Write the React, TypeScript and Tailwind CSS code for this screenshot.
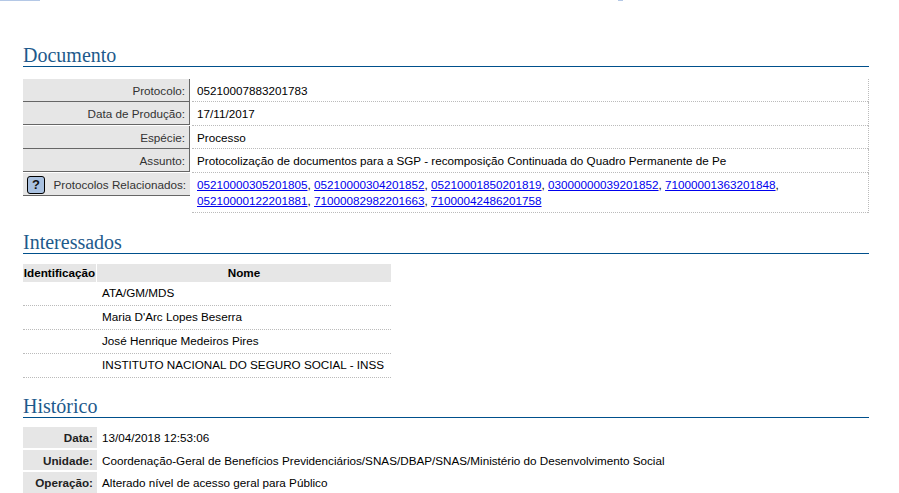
const Heading = ({ title }: { title: string }) => (
    <h2 className="h-[24px] border-b border-[#00508c] font-['Liberation_Serif',serif] text-[20px] leading-[24px] text-[#1d5a8c]">
        {title}
    </h2>
)

const DocRow = ({ label, h, children, help }: { label: string; h: string; children: React.ReactNode; help?: boolean }) => (
    <div className={`flex border-r border-dotted border-[#bbbbbb] ${h}`}>
        <div className={`flex h-[23px] w-[167px] shrink-0 items-center justify-end border-b border-[#666666] bg-[#e6e6e6] pt-[1px] pr-[4px] text-[#333333] ${help ? "" : "border-r"}`}>
            {help && (
                <span className="mr-auto ml-[4px] flex h-[18px] w-[18px] items-center justify-center rounded-[3px] border border-black bg-[#a9c1e0] text-[13px] leading-none font-bold text-[#111111]">
                    ?
                </span>
            )}
            {label}
        </div>
        <div className="ml-[2px] min-w-0 flex-1 border-b border-dotted border-[#bbbbbb] pt-[4px] pl-[5px] leading-[16px]">
            {children}
        </div>
    </div>
)

const links = [
    "05210000305201805",
    "05210000304201852",
    "05210001850201819",
    "03000000039201852",
    "71000001363201848",
    "05210000122201881",
    "71000082982201663",
    "71000042486201758",
]

const names = ["ATA/GM/MDS", "Maria D'Arc Lopes Beserra", "José Henrique Medeiros Pires", "INSTITUTO NACIONAL DO SEGURO SOCIAL - INSS"]

const historico = [
    ["Data:", "13/04/2018 12:53:06"],
    ["Unidade:", "Coordenação-Geral de Benefícios Previdenciários/SNAS/DBAP/SNAS/Ministério do Desenvolvimento Social"],
    ["Operação:", "Alterado nível de acesso geral para Público"],
]

export default function App() {
    return (
        <div className="h-[493px] overflow-hidden bg-white font-['Liberation_Sans',Arial,sans-serif] text-[11.7px] text-black">
            {/* faixa do topo */}
            <div className="flex h-[1px]">
                <div className="h-full w-[40px] bg-[#b4c8e6]"></div>
                <div className="ml-[578px] h-full w-[5px] bg-[#b4c8e6]"></div>
            </div>

            <div className="ml-[23px] w-[846px] pt-[42px]">
                <Heading title="Documento" />
                <div className="mt-[12px]">
                    <DocRow label="Protocolo:" h="h-[23px]">05210007883201783</DocRow>
                    <DocRow label="Data de Produção:" h="h-[24px]">17/11/2017</DocRow>
                    <DocRow label="Espécie:" h="h-[23px]">Processo</DocRow>
                    <DocRow label="Assunto:" h="h-[24px]">Protocolização de documentos para a SGP - recomposição Continuada do Quadro Permanente de Pe</DocRow>
                    <DocRow label="Protocolos Relacionados:" h="h-[40px]" help>
                        {links.map((l, i) => (
                            <span key={l}>
                                <a href="#" className="text-[#0000ee] underline">{l}</a>
                                {i < links.length - 1 ? ", " : ""}
                            </span>
                        ))}
                    </DocRow>
                </div>

                <div className="mt-[17px]">
                    <Heading title="Interessados" />
                </div>
                <div className="mt-[10px] w-[368px]">
                    <div className="flex h-[18px] font-bold leading-[18px]">
                        <div className="w-[73px] bg-[#e6e6e6] text-center">Identificação</div>
                        <div className="ml-[1px] flex-1 bg-[#e6e6e6] text-center">Nome</div>
                    </div>
                    {names.map((n) => (
                        <div key={n} className="h-[24px] border-b border-dotted border-[#bbbbbb] pl-[79px] leading-[22px]">{n}</div>
                    ))}
                </div>

                <div className="mt-[16px]">
                    <Heading title="Histórico" />
                </div>
                <div className="mt-[9px]">
                    {historico.map(([k, v]) => (
                        <div key={k} className="mb-[2px] flex h-[20.5px] leading-[21px]">
                            <div className="w-[74px] bg-[#e6e6e6] pr-[4px] text-right font-bold text-[#222222]">{k}</div>
                            <div className="pl-[5px]">{v}</div>
                        </div>
                    ))}
                </div>
            </div>
        </div>
    )
}
